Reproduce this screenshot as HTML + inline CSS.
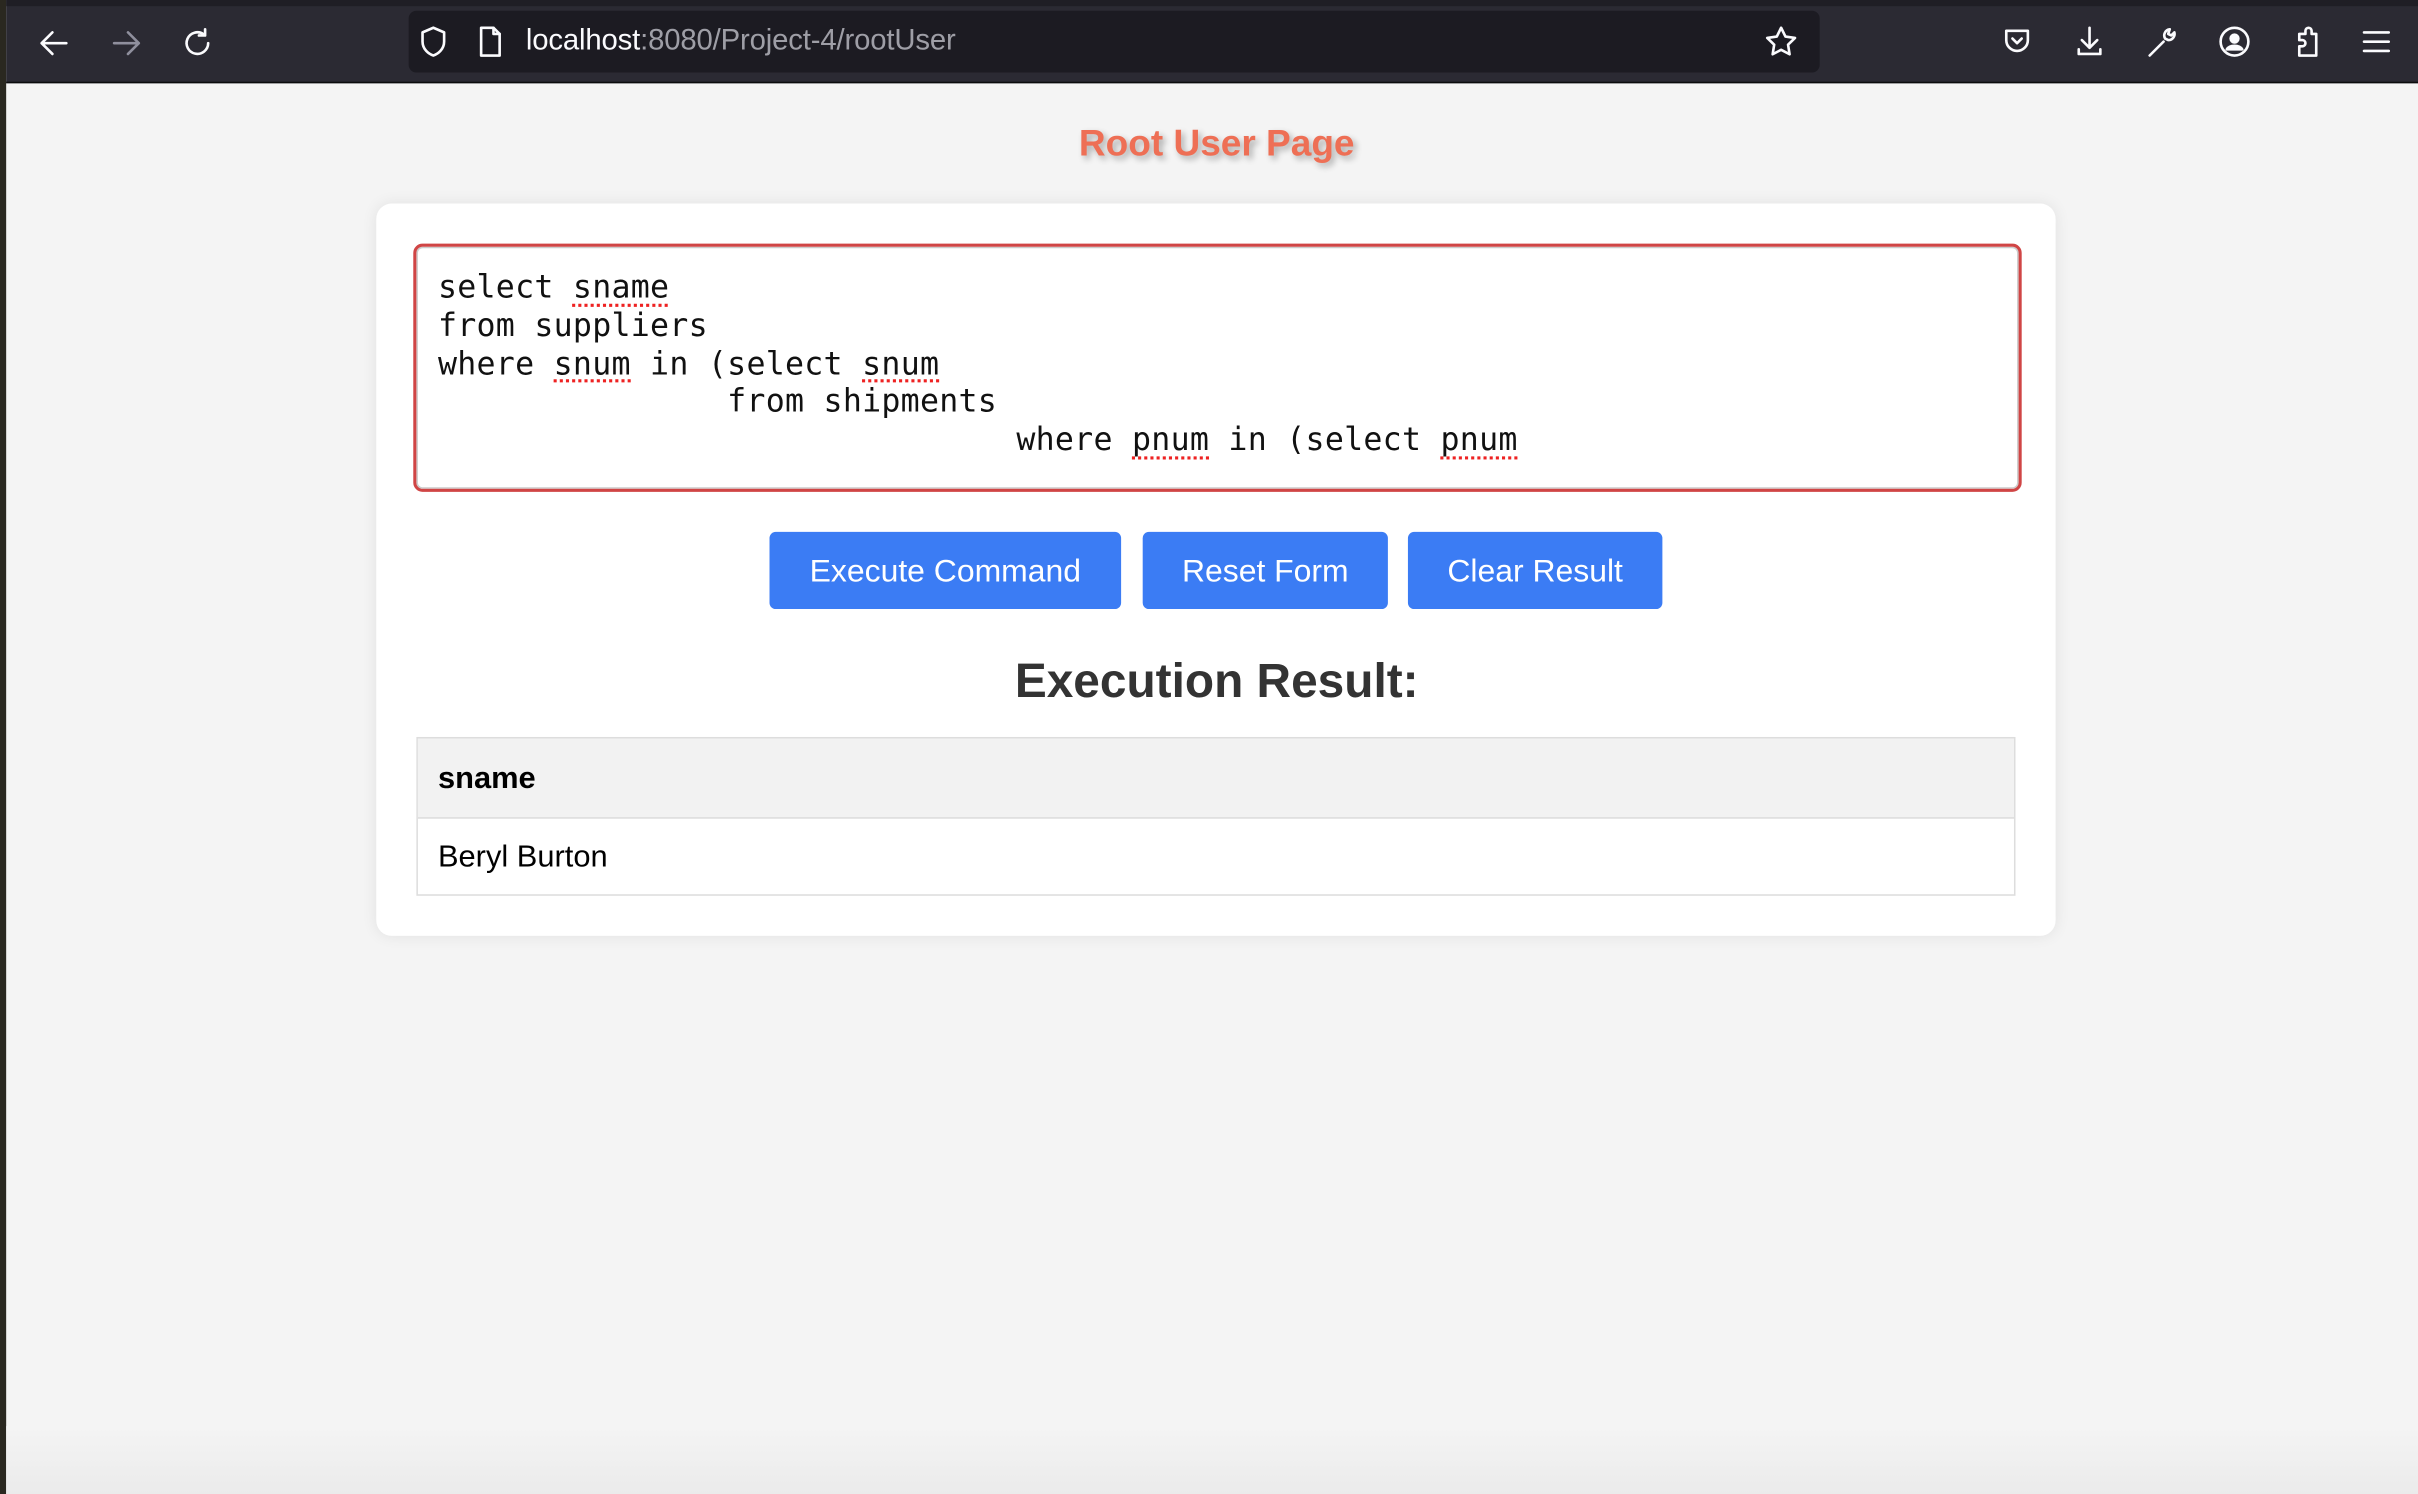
<!DOCTYPE html>
<html><head><meta charset="utf-8">
<style>
html,body{margin:0;padding:0;width:2418px;height:1494px;overflow:hidden;background:#f4f4f4}
#s{position:absolute;left:0;top:0;width:1568px;height:969px;transform:scale(1.5421,1.5418);transform-origin:0 0;background:#f4f4f4;font-family:"Liberation Sans",Arial,sans-serif;overflow:hidden}
.edge{position:absolute;left:0;top:0;width:4px;height:969px;background:#2a2820}
.tb{position:absolute;left:4px;top:0;right:0;height:53px;background:#2b2a33;border-bottom:1px solid #0c0c0d}
.tb .top{position:absolute;left:0;right:0;top:0;height:4px;background:#1f1e25}
.url{position:absolute;left:261px;top:7px;width:915px;height:40px;background:#1c1b22;border-radius:5px}
.url span{position:absolute;left:76px;top:9px;font-size:19px;color:#fbfbfe;letter-spacing:-0.1px}
.url span i{font-style:normal;color:#9e9ea6}
svg.ic{position:absolute;width:24px;height:24px;fill:none;stroke:#fbfbfe;stroke-width:1.7;stroke-linecap:round;stroke-linejoin:round}
h1{position:absolute;left:0;width:1578px;top:80px;margin:0;text-align:center;font-size:24px;font-weight:bold;color:#ee6f55;text-shadow:2px 2px 4px rgba(0,0,0,.3)}
.card{position:absolute;left:244px;top:132px;width:1089px;height:475px;background:#fff;border-radius:10px;box-shadow:0 0 10px rgba(0,0,0,.08)}
.ta{position:absolute;left:268px;top:158px;width:1039px;height:157px;border:2px solid #d04545;border-radius:6px;box-shadow:inset 0 0 0 1px #ccc}
pre{position:absolute;left:284px;top:174px;margin:0;font-family:"DejaVu Sans Mono","Liberation Mono",monospace;font-size:20.5px;letter-spacing:0.16px;line-height:24.8px;color:#111}
pre u{text-decoration:underline dotted #e22;text-underline-offset:4px;text-decoration-thickness:2px}
.btn{position:absolute;top:345px;height:50px;background:#3b7cf4;border-radius:4px;color:#fff;font-size:20.7px;line-height:52px;text-align:center}
h2{position:absolute;left:0;width:1578px;top:424px;margin:0;text-align:center;font-size:31px;font-weight:bold;color:#333}
.tbl{position:absolute;left:270px;top:478px;width:1035px;height:101px;border:1px solid #ddd}
.th{position:absolute;left:0;top:0;width:1035px;height:51px;background:#f2f2f2;border-bottom:1px solid #ddd}
.t{position:absolute;left:13px;font-size:20px;color:#000}
.bot{position:absolute;left:4px;right:0;top:925px;height:44px;background:linear-gradient(#f4f4f4,#ebebeb)}
</style></head><body>
<div id="s">
<div class="edge"></div>
<div class="bot"></div>
<div class="tb"><div class="top"></div>
<div class="url"><span>localhost<i>:8080/Project-4/rootUser</i></span></div>
</div>
<svg class="ic" style="left:23px;top:16px" viewBox="0 0 24 24"><path d="M20 12H4M11 5l-7 7 7 7"/></svg>
<svg class="ic" style="left:70px;top:16px;stroke:#8f8f9d" viewBox="0 0 24 24"><path d="M4 12h16M13 5l7 7-7 7"/></svg>
<svg class="ic" style="left:116px;top:16px" viewBox="0 0 24 24"><path d="M19 12a7 7 0 1 1-3-5.8"/><path d="M17 3v4h-4" /></svg>
<svg class="ic" style="left:269px;top:15px" viewBox="0 0 24 24"><path d="M12 3l7 3v6c0 5-4 8-7 9-3-1-7-4-7-9V6z"/></svg>
<svg class="ic" style="left:306px;top:15px" viewBox="0 0 24 24"><path d="M6 3h8l4 4v14H6z"/><path d="M14 3v4h4"/></svg>
<svg class="ic" style="left:1143px;top:15px" viewBox="0 0 24 24"><path d="M12 3l2.8 5.7 6.2.9-4.5 4.4 1 6.2L12 17.3 6.5 20.2l1-6.2L3 9.6l6.2-.9z"/></svg>
<svg class="ic" style="left:1296px;top:15px" viewBox="0 0 24 24"><path d="M5 5h14v6a7 7 0 0 1-14 0z"/><path d="M9 10l3 3 3-3"/></svg>
<svg class="ic" style="left:1343px;top:15px" viewBox="0 0 24 24"><path d="M12 3v13M7 11l5 5 5-5M5 17v3h14v-3"/></svg>
<svg class="ic" style="left:1390px;top:15px" viewBox="0 0 24 24"><path d="M4 21l9-9"/><path d="M17 4a4 4 0 0 0-3 6l2 1a4 4 0 0 0 4-5l-2 2-2-1 1-3z"/></svg>
<svg class="ic" style="left:1437px;top:15px" viewBox="0 0 24 24"><circle cx="12" cy="12" r="9"/><circle cx="12" cy="10" r="2.5" fill="#fbfbfe"/><path d="M7 17c2-3 8-3 10 0z" fill="#fbfbfe"/></svg>
<svg class="ic" style="left:1484px;top:15px" viewBox="0 0 24 24"><path d="M7 21V15h2a2 2 0 0 0 0-4H7V7h4V5a2 2 0 0 1 4 0v2h3v14z"/></svg>
<svg class="ic" style="left:1529px;top:15px" viewBox="0 0 24 24"><path d="M4 6h16M4 12h16M4 18h16"/></svg>
<h1>Root User Page</h1>
<div class="card"></div>
<div class="ta"></div>
<pre>select <u>sname</u>
from suppliers
where <u>snum</u> in (select <u>snum</u>
               from shipments
                              where <u>pnum</u> in (select <u>pnum</u></pre>
<div class="btn" style="left:499px;width:228px">Execute Command</div>
<div class="btn" style="left:741px;width:159px">Reset Form</div>
<div class="btn" style="left:913px;width:165px">Clear Result</div>
<h2>Execution Result:</h2>
<div class="tbl"><div class="th"><div class="t" style="top:15px;font-weight:bold">sname</div></div>
<div class="t" style="top:66px">Beryl Burton</div></div>
</div>
</body></html>
